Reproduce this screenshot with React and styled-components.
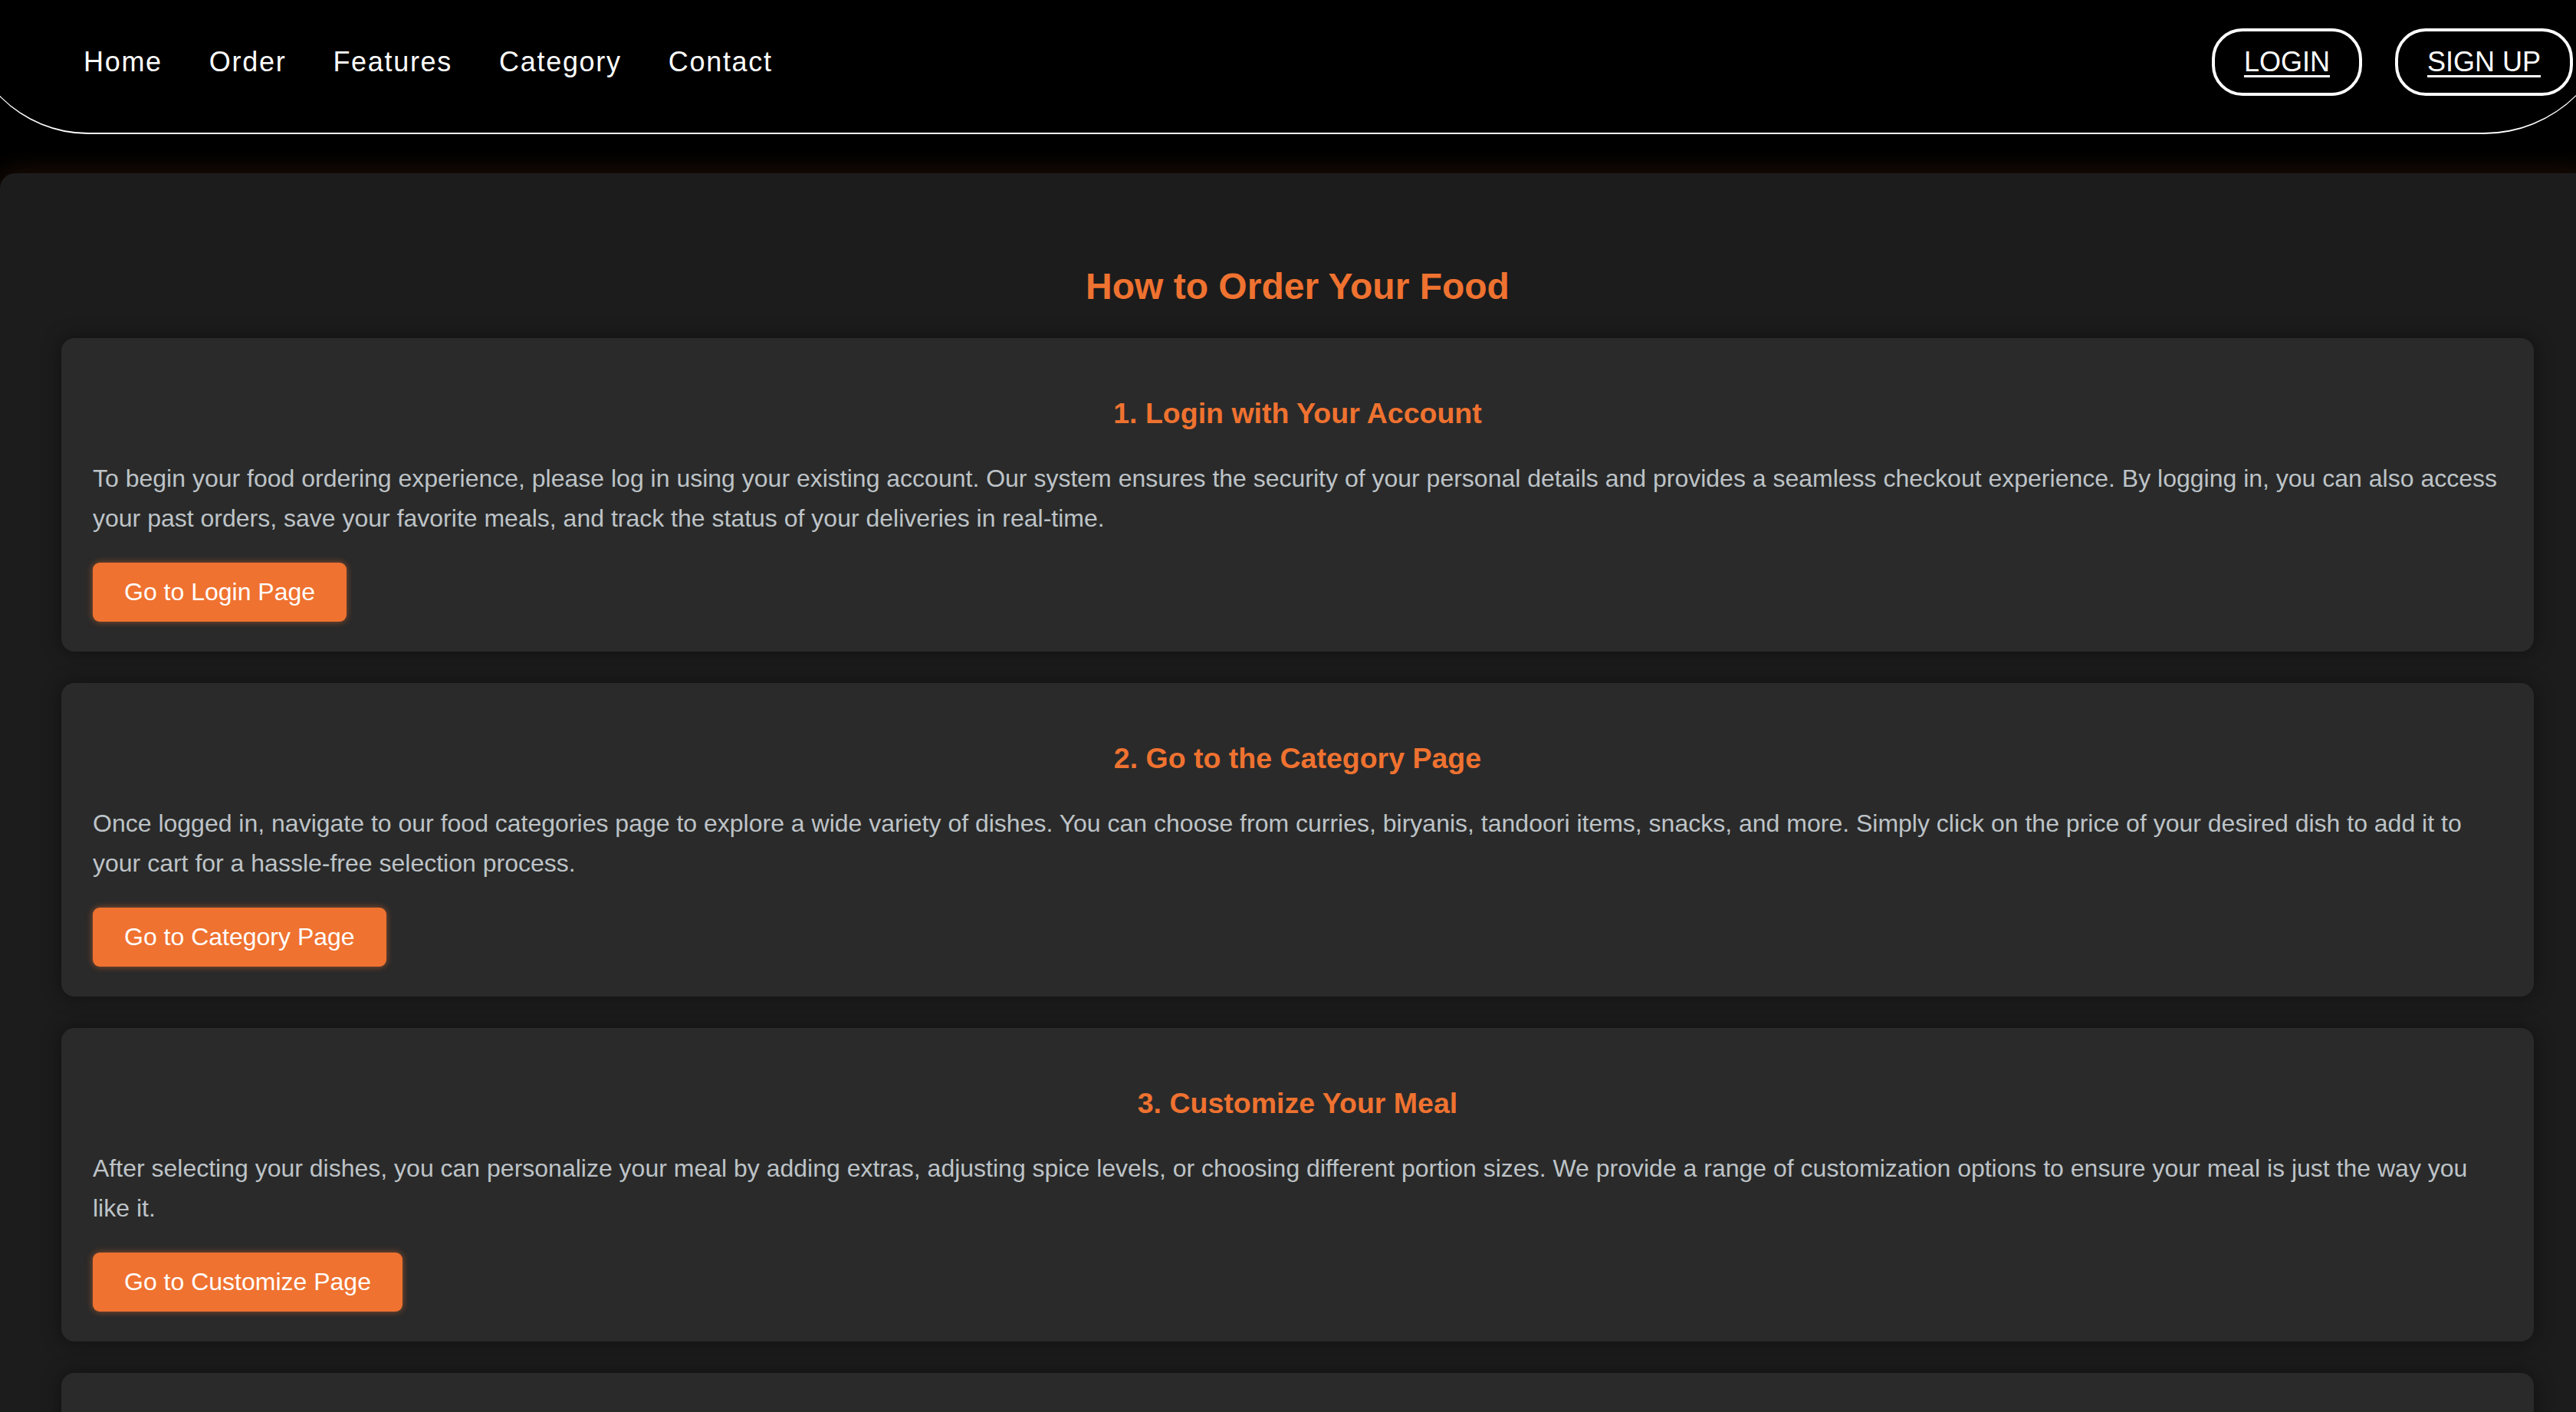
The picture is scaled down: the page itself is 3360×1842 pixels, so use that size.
import React from "react";
import styled, { createGlobalStyle } from "styled-components";

const GlobalStyle = createGlobalStyle`
  html, body {
    margin: 0;
    padding: 0;
    background: #000;
    overflow-x: hidden;
  }
  body {
    font-family: "Liberation Sans", Arial, Helvetica, sans-serif;
  }
  * { box-sizing: border-box; }
`;

const ORANGE = "#ef7230";

const Page = styled.div`
  width: 100%;
  min-height: 1842px;
  overflow: hidden;
  background: #000;
`;

const Nav = styled.nav`
  display: flex;
  align-items: center;
  justify-content: space-between;
  height: 175px;
  margin-left: -45px;
  width: calc(100% + 95px);
  padding: 0 54px 12px 154px;
  background: #000;
  border-bottom: 2px solid #fff;
  border-radius: 0 0 170px 160px;
`;

const NavLinks = styled.ul`
  display: flex;
  align-items: center;
  gap: 61px;
  list-style: none;
  margin: 0;
  padding: 0;
`;

const NavLink = styled.a`
  color: #fff;
  font-size: 36px;
  letter-spacing: 1.7px;
  text-decoration: none;
`;

const AuthGroup = styled.div`
  display: flex;
  align-items: center;
  gap: 43px;
`;

const AuthButton = styled.a`
  display: inline-flex;
  align-items: center;
  justify-content: center;
  height: 88px;
  padding: 0 38px;
  border: 4px solid #fff;
  border-radius: 40px;
  color: #fff;
  font-size: 36px;
  text-decoration: underline;
  text-decoration-thickness: 3px;
  text-underline-offset: 5px;
`;

const Main = styled.main`
  margin-top: 51px;
  width: calc(100% + 25px);
  min-height: 1700px;
  padding: 80px 80px 80px 80px;
  background: #1c1c1c;
  border-radius: 20px 20px 0 0;
  box-shadow: 0 0 36px rgba(238, 114, 48, 0.16);
`;

const Title = styled.h2`
  margin: 40px 0 40px;
  text-align: center;
  color: ${ORANGE};
  font-size: 48px;
  font-weight: 700;
  line-height: normal;
`;

const Steps = styled.div`
  display: flex;
  flex-direction: column;
  gap: 41px;
`;

const StepCard = styled.section`
  background: #2a2a2a;
  border-radius: 17px;
  padding: 77px 41px 39px;
  box-shadow: 0 0 26px rgba(0, 0, 0, 0.45);
`;

const StepTitle = styled.h3`
  margin: 0 0 37px;
  text-align: center;
  color: ${ORANGE};
  font-size: 37.5px;
  font-weight: 700;
  line-height: normal;
`;

const StepText = styled.p`
  margin: 0 0 32px;
  color: #bdc3c7;
  font-size: 32px;
  line-height: 52px;
`;

const StepButton = styled.a`
  display: inline-block;
  padding: 20px 41px;
  line-height: 37px;
  background: ${ORANGE};
  color: #fff;
  font-size: 32px;
  border-radius: 9px;
  text-decoration: none;
  box-shadow: 0 0 9px rgba(239, 114, 48, 0.55);
`;

const steps = [
  {
    title: "1. Login with Your Account",
    text:
      "To begin your food ordering experience, please log in using your existing account. Our system ensures the security of your personal details and provides a seamless checkout experience. By logging in, you can also access your past orders, save your favorite meals, and track the status of your deliveries in real-time.",
    button: "Go to Login Page",
  },
  {
    title: "2. Go to the Category Page",
    text:
      "Once logged in, navigate to our food categories page to explore a wide variety of dishes. You can choose from curries, biryanis, tandoori items, snacks, and more. Simply click on the price of your desired dish to add it to your cart for a hassle-free selection process.",
    button: "Go to Category Page",
  },
  {
    title: "3. Customize Your Meal",
    text:
      "After selecting your dishes, you can personalize your meal by adding extras, adjusting spice levels, or choosing different portion sizes. We provide a range of customization options to ensure your meal is just the way you like it.",
    button: "Go to Customize Page",
  },
  {
    title: "4. Proceed to Checkout",
    text:
      "Once you are happy with your selection, review your cart and proceed to checkout. Choose your preferred payment method and delivery address to complete your order.",
    button: "Go to Checkout Page",
  },
];

export default function App() {
  return (
    <Page>
      <GlobalStyle />
      <Nav>
        <NavLinks>
          {["Home", "Order", "Features", "Category", "Contact"].map((l) => (
            <li key={l}>
              <NavLink href="#">{l}</NavLink>
            </li>
          ))}
        </NavLinks>
        <AuthGroup>
          <AuthButton href="#">LOGIN</AuthButton>
          <AuthButton href="#">SIGN UP</AuthButton>
        </AuthGroup>
      </Nav>
      <Main>
        <Title>How to Order Your Food</Title>
        <Steps>
          {steps.map((s) => (
            <StepCard key={s.title}>
              <StepTitle>{s.title}</StepTitle>
              <StepText>{s.text}</StepText>
              <StepButton href="#">{s.button}</StepButton>
            </StepCard>
          ))}
        </Steps>
      </Main>
    </Page>
  );
}
